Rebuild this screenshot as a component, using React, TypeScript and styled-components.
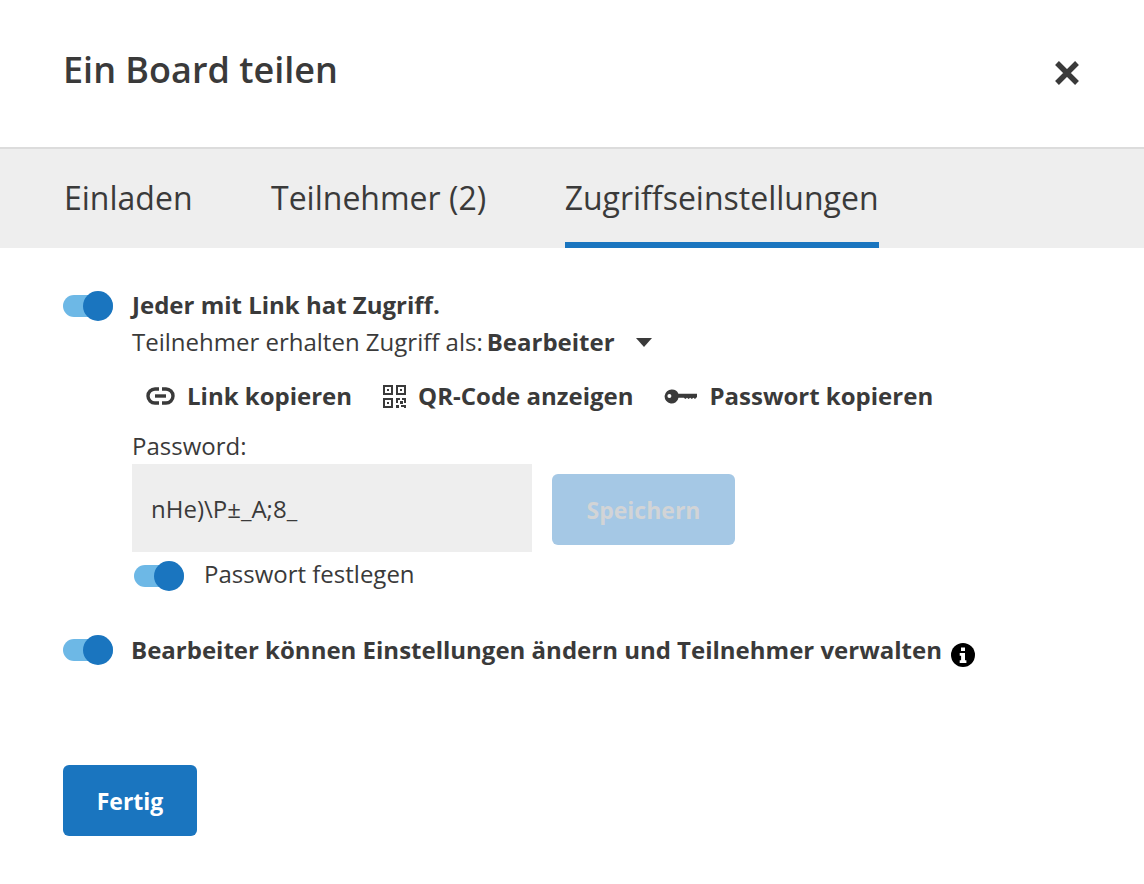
import React from "react"
import styled, { createGlobalStyle } from "styled-components"

const GlobalStyle = createGlobalStyle`
  html, body { margin: 0; padding: 0; background: #fff; }
  body { font-family: "Open Sans", "Liberation Sans", sans-serif; color: #3a3a3a; }
`

const Dialog = styled.div`
  width: 1144px;
  height: 884px;
  overflow: hidden;
  display: flex;
  flex-direction: column;
`

const Header = styled.header`
  height: 149px;
  box-sizing: border-box;
  padding: 47px 64px 0 63px;
  display: flex;
  justify-content: space-between;
  align-items: flex-start;
  border-bottom: 2px solid #dcdcdc;
`

const Title = styled.h1`
  margin: 0;
  font-size: 36px;
  line-height: 46px;
  font-weight: 600;
`

const CloseButton = styled.button`
  border: 0;
  background: none;
  padding: 0;
  margin-top: 13px;
  width: 26px;
  height: 26px;
  color: #3a3a3a;
  display: flex;
`

const Tabs = styled.nav`
  height: 99px;
  box-sizing: border-box;
  background: #eeeeee;
  padding: 0 64px;
  display: flex;
  gap: 78.5px;
`

const Tab = styled.div<{ $active?: boolean }>`
  height: 99px;
  box-sizing: border-box;
  padding-top: 28px;
  font-size: 32px;
  line-height: 42px;
  border-bottom: 6px solid ${p => (p.$active ? "#1a75bf" : "transparent")};
`

const Body = styled.main`
  flex: 1;
  padding: 42px 64px 0 63px;
  display: flex;
  flex-direction: column;
`

const OptionRow = styled.div`
  display: flex;
  align-items: flex-start;
  gap: 19px;
`

const Track = styled.span`
  position: relative;
  display: block;
  flex: none;
  width: 50px;
  height: 22px;
  margin-top: 5px;
  border-radius: 11px;
  background: #6db8e6;
`

const Knob = styled.span`
  position: absolute;
  right: 0;
  top: -4px;
  width: 30px;
  height: 30px;
  border-radius: 50%;
  background: #1a75bf;
`

const OptionBody = styled.div`
  display: flex;
  flex-direction: column;
`

const Strong = styled.div`
  font-size: 24px;
  line-height: 30px;
  font-weight: 700;
`

const AccessLine = styled.div`
  margin-top: 7px;
  font-size: 24px;
  line-height: 30px;
  display: flex;
  align-items: center;
  b { margin-left: 4px; font-weight: 700; }
`

const Caret = styled.span`
  margin-left: 21px;
  width: 0;
  height: 0;
  border-left: 8.5px solid transparent;
  border-right: 8.5px solid transparent;
  border-top: 9px solid #3a3a3a;
`

const Actions = styled.div`
  margin-top: 23px;
  padding-left: 14px;
  display: flex;
  gap: 31px;
`

const Action = styled.div`
  display: flex;
  align-items: center;
  gap: 12px;
  font-size: 24px;
  line-height: 32px;
  font-weight: 700;
  white-space: nowrap;
`

const FieldLabel = styled.div`
  margin-top: 19px;
  font-size: 24px;
  line-height: 30px;
`

const FieldRow = styled.div`
  margin-top: 3px;
  display: flex;
  align-items: center;
  gap: 20px;
`

const PasswordInput = styled.div`
  width: 400px;
  height: 88px;
  box-sizing: border-box;
  padding: 1px 0 0 19px;
  background: #eeeeee;
  font-size: 24px;
  line-height: 88px;
`

const SaveButton = styled.button`
  margin-top: 2px;
  width: 183px;
  height: 71px;
  border: 0;
  border-radius: 6px;
  padding: 2px 0 0;
  background: #a5c8e5;
  color: #d2d4d6;
  font: 700 23px "Open Sans", sans-serif;
`

const SubToggleRow = styled.div`
  margin-top: 6px;
  padding-left: 2px;
  display: flex;
  align-items: center;
  gap: 20px;
  font-size: 24px;
  line-height: 30px;
`

const SubToggleLabel = styled.span`
  padding-top: 1px;
`

const SecondOption = styled(OptionRow)`
  margin-top: 45px;
  gap: 18px;
`

const Line = styled.div`
  margin-top: -2px;
  display: flex;
  align-items: center;
  gap: 9px;
  font-size: 24px;
  line-height: 30px;
  font-weight: 700;
  white-space: nowrap;
`

const DoneButton = styled.button`
  margin-top: 98px;
  width: 134px;
  height: 71px;
  border: 0;
  border-radius: 6px;
  background: #1a75bf;
  color: #fff;
  font: 700 23px "Open Sans", sans-serif;
`

const Toggle = () => (
  <Track>
    <Knob />
  </Track>
)

const LinkIcon = () => (
  <svg width="29" height="18" viewBox="-0.5 0 29 18" fill="none" stroke="currentColor" strokeWidth="3.4">
    <path d="M12.5 2H8.5a7 7 0 0 0 0 14h4" />
    <path d="M15.5 2h4a7 7 0 0 1 0 14h-4" />
    <path d="M8.5 9h11" />
  </svg>
)

const QrIcon = () => (
  <svg width="23" height="23" viewBox="0 0 23 23" fill="currentColor">
    <path fillRule="evenodd" d="M0 0h10v10H0zM2 2v6h6V2zM13 0h10v10H13zM15 2v6h6V2zM0 13h10v10H0zM2 15v6h6v-6z" />
    <path d="M4 4h2v2H4zM17 4h2v2h-2zM4 17h2v2H4zM13 13h4v2h-2v3h-2zM19 13h4v5h-2v-3h-2zM17 16h3v3h-3zM13 20h3v3h-3zM18 20h5v3h-2v-1h-3z" />
  </svg>
)

const KeyIcon = () => (
  <svg width="33" height="15" viewBox="-1 0 33 15" fill="currentColor">
    <path fillRule="evenodd" d="M7 0.5a7 7 0 0 1 6.4 4.2H32v3.4l-2 2-1.6-1.4-1.6 1.4-1.6-1.4-1.6 1.4-1.6-1.4-1.6 1.4-1.6-1.4h-5.3A7 7 0 1 1 7 0.5zM4.4 5a2 2 0 1 0 0 4 2 2 0 0 0 0-4z" />
  </svg>
)

const InfoIcon = () => (
  <svg width="24" height="24" viewBox="0 0 24 24" style={{ marginTop: 11 }}>
    <circle cx="12" cy="12" r="12" fill="#000" />
    <path fill="#fff" d="M10 4.5h4v3.6h-4zM8.7 10h5.3v7.2h1.4V20H8.7v-2.8h1.4v-4.4H8.7z" />
  </svg>
)

const App = () => {
  return (
    <Dialog>
      <GlobalStyle />
      <Header>
        <Title>Ein Board teilen</Title>
        <CloseButton aria-label="close">
          <svg width="26" height="26" viewBox="0 0 26 26">
            <path d="M3 3l20 20M23 3L3 23" stroke="currentColor" strokeWidth="5.4" />
          </svg>
        </CloseButton>
      </Header>
      <Tabs>
        <Tab>Einladen</Tab>
        <Tab>Teilnehmer (2)</Tab>
        <Tab $active>Zugriffseinstellungen</Tab>
      </Tabs>
      <Body>
        <OptionRow>
          <Toggle />
          <OptionBody>
            <Strong>Jeder mit Link hat Zugriff.</Strong>
            <AccessLine>
              Teilnehmer erhalten Zugriff als: <b>Bearbeiter</b>
              <Caret />
            </AccessLine>
            <Actions>
              <Action><LinkIcon />Link kopieren</Action>
              <Action><QrIcon />QR-Code anzeigen</Action>
              <Action><KeyIcon />Passwort kopieren</Action>
            </Actions>
            <FieldLabel>Password:</FieldLabel>
            <FieldRow>
              <PasswordInput>nHe)\P±_A;8_</PasswordInput>
              <SaveButton disabled>Speichern</SaveButton>
            </FieldRow>
            <SubToggleRow>
              <Toggle />
              <SubToggleLabel>Passwort festlegen</SubToggleLabel>
            </SubToggleRow>
          </OptionBody>
        </OptionRow>
        <SecondOption>
          <Toggle />
          <Line>
            Bearbeiter können Einstellungen ändern und Teilnehmer verwalten
            <InfoIcon />
          </Line>
        </SecondOption>
        <DoneButton>Fertig</DoneButton>
      </Body>
    </Dialog>
  )
}

export default App
